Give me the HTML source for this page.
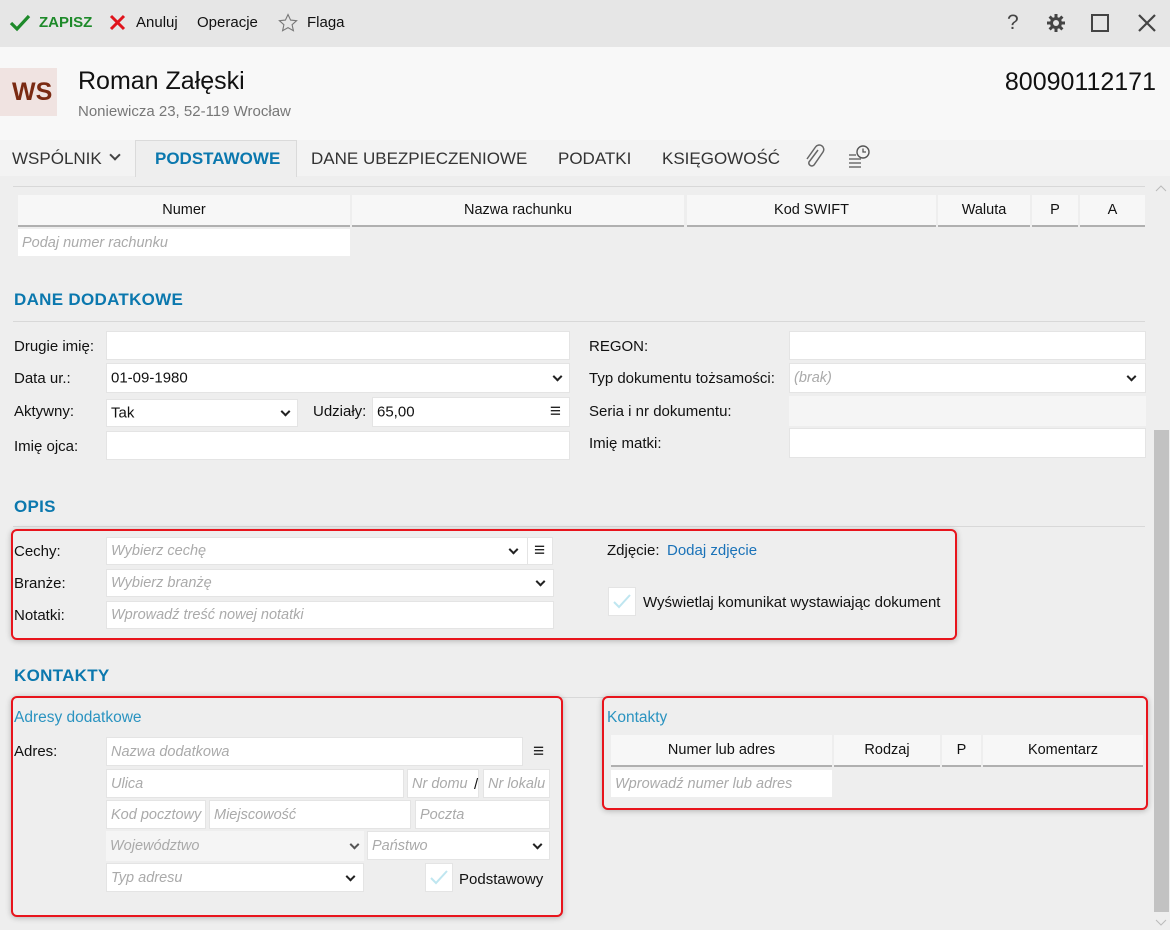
<!DOCTYPE html>
<html><head><meta charset="utf-8"><style>
*{box-sizing:border-box;margin:0;padding:0}
body{width:1170px;height:930px;overflow:hidden;background:#eeeeee;font-family:"Liberation Sans",sans-serif;font-size:14px;color:#111;position:relative}
.a{position:absolute}
.t{position:absolute;white-space:nowrap;line-height:1;font-size:15px}
.in{position:absolute;background:#fff;border:1px solid #e4e4e4}
.ph{color:#aaa;font-style:italic;font-size:14.5px;position:absolute;left:4px;top:50%;transform:translateY(-50%);white-space:nowrap}
.val{position:absolute;left:4px;top:50%;transform:translateY(-50%);font-size:15px}
.chev{position:absolute;top:50%;width:7px;height:7px;border-right:2px solid #222;border-bottom:2px solid #222;transform:translateY(-70%) rotate(45deg)}
.ham{position:absolute;top:50%;transform:translateY(-50%);font-size:19px;color:#222}
.sec{position:absolute;color:#0b78ae;font-weight:bold;font-size:17px;white-space:nowrap;letter-spacing:.3px}
.hl{position:absolute;height:1px;background:#d8d8d8}
.th{position:absolute;background:#f7f7f7;border-bottom:2px solid #b0b0b0;text-align:center;font-size:14.5px;line-height:30px}
.red{position:absolute;border:2px solid #e8141c;border-radius:6px;box-shadow:0 1px 6px rgba(0,0,0,.25)}
.cb{position:absolute;width:28px;height:29px;background:#fff;border:1px solid #e4e4e4}
</style></head><body>
<div class="a" style="left:0;top:0;width:1170px;height:47px;background:#e6e6e6"></div>
<svg class="a" style="top:14px;left:9px" width="22" height="18"><path d="M2 9l6 6L20 2" stroke="#1e8a2a" stroke-width="3.2" fill="none"/></svg>
<div class="t" style="left:39px;top:15px;color:#1e8a2a;font-weight:bold;font-size:15px">ZAPISZ</div>
<svg class="a" style="left:109px;top:14px" width="17" height="17"><path d="M2 2L15 15M15 2L2 15" stroke="#e0141c" stroke-width="3" fill="none"/></svg>
<div class="t" style="left:136px;top:15px;font-size:15px">Anuluj</div>
<div class="t" style="left:197px;top:15px;font-size:15px">Operacje</div>
<svg class="a" style="left:278px;top:13px" width="20" height="20"><path d="M10 1.5l2.6 5.6 6 .6-4.5 4 1.3 6L10 14.6 4.6 17.7l1.3-6-4.5-4 6-.6z" stroke="#777" stroke-width="1.1" fill="none"/></svg>
<div class="t" style="left:307px;top:15px;font-size:15px">Flaga</div>
<div class="t" style="left:1007px;top:12px;font-size:21px;color:#444">?</div>
<svg class="a" style="left:1045px;top:12px" width="22" height="22" viewBox="0 0 22 22"><g stroke="#444" stroke-width="3"><path d="M11 2v18M2 11h18M4.6 4.6l12.8 12.8M17.4 4.6L4.6 17.4"/></g><circle cx="11" cy="11" r="6" fill="#444"/><circle cx="11" cy="11" r="3" fill="#e6e6e6"/></svg>
<div class="a" style="left:1091px;top:14px;width:18px;height:18px;border:2px solid #444"></div>
<svg class="a" style="left:1137px;top:13px" width="20" height="20"><path d="M2 2L18 18M18 2L2 18" stroke="#444" stroke-width="2.2"/></svg>
<div class="a" style="left:0;top:47px;width:1170px;height:93px;background:#f8f8f8"></div>
<div class="a" style="left:0;top:68px;width:57px;height:48px;background:#f0e3e1"></div>
<div class="t" style="left:12px;top:80px;font-size:25px;color:#7a2a12;font-weight:bold">WS</div>
<div class="t" style="left:78px;top:69px;font-size:25px">Roman Załęski</div>
<div class="t" style="left:78px;top:104px;font-size:15px;color:#777">Noniewicza 23, 52-119 Wrocław</div>
<div class="t" style="right:14px;top:70px;font-size:25px">80090112171</div>
<div class="a" style="left:0;top:140px;width:1170px;height:36px;background:#f3f3f3"></div>
<div class="a" style="left:135px;top:140px;width:162px;height:37px;background:#eeeeee;border:1px solid #dadada;border-bottom:none"></div>
<div class="t" style="left:12px;top:150px;font-size:17px;color:#333">WSPÓLNIK</div>
<div class="a" style="left:111px;top:151px;width:8px;height:8px;border-right:2px solid #444;border-bottom:2px solid #444;transform:rotate(45deg)"></div>
<div class="t" style="left:155px;top:150px;font-size:17px;color:#0b78ae;font-weight:bold">PODSTAWOWE</div>
<div class="t" style="left:311px;top:150px;font-size:17px;color:#333">DANE UBEZPIECZENIOWE</div>
<div class="t" style="left:558px;top:150px;font-size:17px;color:#333">PODATKI</div>
<div class="t" style="left:662px;top:150px;font-size:17px;color:#333">KSIĘGOWOŚĆ</div>
<svg class="a" style="left:803px;top:144px" width="24" height="26" viewBox="0 0 24 26"><path d="M15 6L6 18a3 3 0 0 0 5 3l9-13a4.5 4.5 0 0 0-7.5-5L4 15" stroke="#666" stroke-width="1.5" fill="none"/></svg>
<svg class="a" style="left:848px;top:144px" width="24" height="24" viewBox="0 0 24 24"><circle cx="15" cy="8" r="6" stroke="#555" stroke-width="1.4" fill="#f3f3f3"/><path d="M15 4.5V8h3" stroke="#555" stroke-width="1.3" fill="none"/><path d="M1 11h7M1 15h12M1 19h12M1 23h12" stroke="#555" stroke-width="1.3"/></svg>
<svg class="a" style="left:1155px;top:184px" width="12" height="10"><path d="M1 7l5-5 5 5" stroke="#bbb" fill="none"/></svg>
<div class="a" style="left:1154px;top:430px;width:15px;height:482px;background:#c2c2c2"></div>
<svg class="a" style="left:1155px;top:918px" width="12" height="10"><path d="M1 2l5 5 5-5" stroke="#bbb" fill="none"/></svg>
<div class="hl" style="left:13px;top:186px;width:1132px"></div>
<div class="th" style="left:18px;top:195px;width:332px">Numer</div>
<div class="th" style="left:352px;top:195px;width:332px">Nazwa rachunku</div>
<div class="th" style="left:687px;top:195px;width:249px">Kod SWIFT</div>
<div class="th" style="left:938px;top:195px;width:92px">Waluta</div>
<div class="th" style="left:1032px;top:195px;width:46px">P</div>
<div class="th" style="left:1080px;top:195px;width:65px">A</div>
<div class="in" style="left:18px;top:229px;width:332px;height:27px;border:none"><span class="ph">Podaj numer rachunku</span></div>
<div class="sec" style="left:14px;top:290px">DANE DODATKOWE</div>
<div class="hl" style="left:13px;top:321px;width:1132px"></div>
<div class="t" style="left:14px;top:339px">Drugie imię:</div>
<div class="in" style="left:106px;top:331px;width:464px;height:29px"></div>
<div class="t" style="left:14px;top:371px">Data ur.:</div>
<div class="in" style="left:106px;top:363px;width:464px;height:30px"><span class="val">01-09-1980</span><span class="chev" style="right:8px"></span></div>
<div class="t" style="left:14px;top:404px">Aktywny:</div>
<div class="in" style="left:106px;top:399px;width:192px;height:28px"><span class="val">Tak</span><span class="chev" style="right:8px"></span></div>
<div class="t" style="left:313px;top:404px">Udziały:</div>
<div class="in" style="left:372px;top:397px;width:198px;height:30px"><span class="val">65,00</span><span class="ham" style="right:8px">≡</span></div>
<div class="t" style="left:14px;top:439px">Imię ojca:</div>
<div class="in" style="left:106px;top:431px;width:464px;height:29px"></div>
<div class="t" style="left:589px;top:339px">REGON:</div>
<div class="in" style="left:789px;top:331px;width:357px;height:29px"></div>
<div class="t" style="left:589px;top:371px">Typ dokumentu tożsamości:</div>
<div class="in" style="left:789px;top:363px;width:357px;height:30px"><span class="ph">(brak)</span><span class="chev" style="right:10px"></span></div>
<div class="t" style="left:589px;top:404px">Seria i nr dokumentu:</div>
<div class="a" style="left:789px;top:396px;width:357px;height:30px;background:#f5f5f5"></div>
<div class="t" style="left:589px;top:436px">Imię matki:</div>
<div class="in" style="left:789px;top:428px;width:357px;height:30px"></div>
<div class="sec" style="left:14px;top:497px">OPIS</div>
<div class="hl" style="left:13px;top:526px;width:1132px"></div>
<div class="red" style="left:11px;top:529px;width:946px;height:111px;background:#eeeeee"></div>
<div class="t" style="left:14px;top:544px">Cechy:</div>
<div class="in" style="left:106px;top:537px;width:422px;height:28px"><span class="ph">Wybierz cechę</span><span class="chev" style="right:10px"></span></div>
<div class="in" style="left:528px;top:537px;width:25px;height:28px;border-left:none"><span class="ham" style="left:6px">≡</span></div>
<div class="t" style="left:14px;top:576px">Branże:</div>
<div class="in" style="left:106px;top:569px;width:448px;height:28px"><span class="ph">Wybierz branżę</span><span class="chev" style="right:9px"></span></div>
<div class="t" style="left:14px;top:608px">Notatki:</div>
<div class="in" style="left:106px;top:601px;width:448px;height:28px"><span class="ph">Wprowadź treść nowej notatki</span></div>
<div class="t" style="left:607px;top:543px">Zdjęcie:</div>
<div class="t" style="left:667px;top:543px;color:#1a72b8">Dodaj zdjęcie</div>
<div class="cb" style="left:608px;top:587px"><svg width="26" height="26"><path d="M5 14l5 5 11-12" stroke="#bfe6f0" stroke-width="2" fill="none"/></svg></div>
<div class="t" style="left:643px;top:595px">Wyświetlaj komunikat wystawiając dokument</div>
<div class="sec" style="left:14px;top:666px">KONTAKTY</div>
<div class="hl" style="left:560px;top:697px;width:585px"></div>
<div class="red" style="left:11px;top:696px;width:552px;height:221px;background:#eeeeee"></div>
<div class="t" style="left:14px;top:710px;color:#2a93c0;font-size:15.5px">Adresy dodatkowe</div>
<div class="t" style="left:14px;top:744px">Adres:</div>
<div class="in" style="left:106px;top:737px;width:417px;height:29px"><span class="ph">Nazwa dodatkowa</span></div>
<span class="ham" style="position:absolute;left:533px;top:752px">≡</span>
<div class="in" style="left:106px;top:769px;width:298px;height:29px"><span class="ph">Ulica</span></div>
<div class="in" style="left:407px;top:769px;width:72px;height:29px"><span class="ph">Nr domu</span></div>
<div class="t" style="left:474px;top:777px">/</div>
<div class="in" style="left:483px;top:769px;width:67px;height:29px"><span class="ph">Nr lokalu</span></div>
<div class="in" style="left:106px;top:800px;width:100px;height:29px"><span class="ph">Kod pocztowy</span></div>
<div class="in" style="left:209px;top:800px;width:202px;height:29px"><span class="ph">Miejscowość</span></div>
<div class="in" style="left:415px;top:800px;width:135px;height:29px"><span class="ph">Poczta</span></div>
<div class="a" style="left:106px;top:831px;width:258px;height:30px;background:#f5f5f5"><span class="ph">Województwo</span><span class="chev" style="right:6px;border-color:#555"></span></div>
<div class="in" style="left:367px;top:831px;width:183px;height:29px"><span class="ph">Państwo</span><span class="chev" style="right:8px"></span></div>
<div class="in" style="left:106px;top:863px;width:258px;height:29px"><span class="ph">Typ adresu</span><span class="chev" style="right:9px"></span></div>
<div class="cb" style="left:425px;top:863px;width:28px;height:29px"><svg width="26" height="26"><path d="M5 14l5 5 11-12" stroke="#bfe6f0" stroke-width="2" fill="none"/></svg></div>
<div class="t" style="left:459px;top:872px">Podstawowy</div>
<div class="red" style="left:602px;top:696px;width:546px;height:114px;background:#eeeeee"></div>
<div class="t" style="left:607px;top:710px;color:#2a93c0;font-size:15.5px">Kontakty</div>
<div class="th" style="left:611px;top:735px;width:221px">Numer lub adres</div>
<div class="th" style="left:834px;top:735px;width:106px">Rodzaj</div>
<div class="th" style="left:942px;top:735px;width:39px">P</div>
<div class="th" style="left:983px;top:735px;width:160px">Komentarz</div>
<div class="in" style="left:611px;top:770px;width:221px;height:27px;border:none"><span class="ph">Wprowadź numer lub adres</span></div>
</body></html>
